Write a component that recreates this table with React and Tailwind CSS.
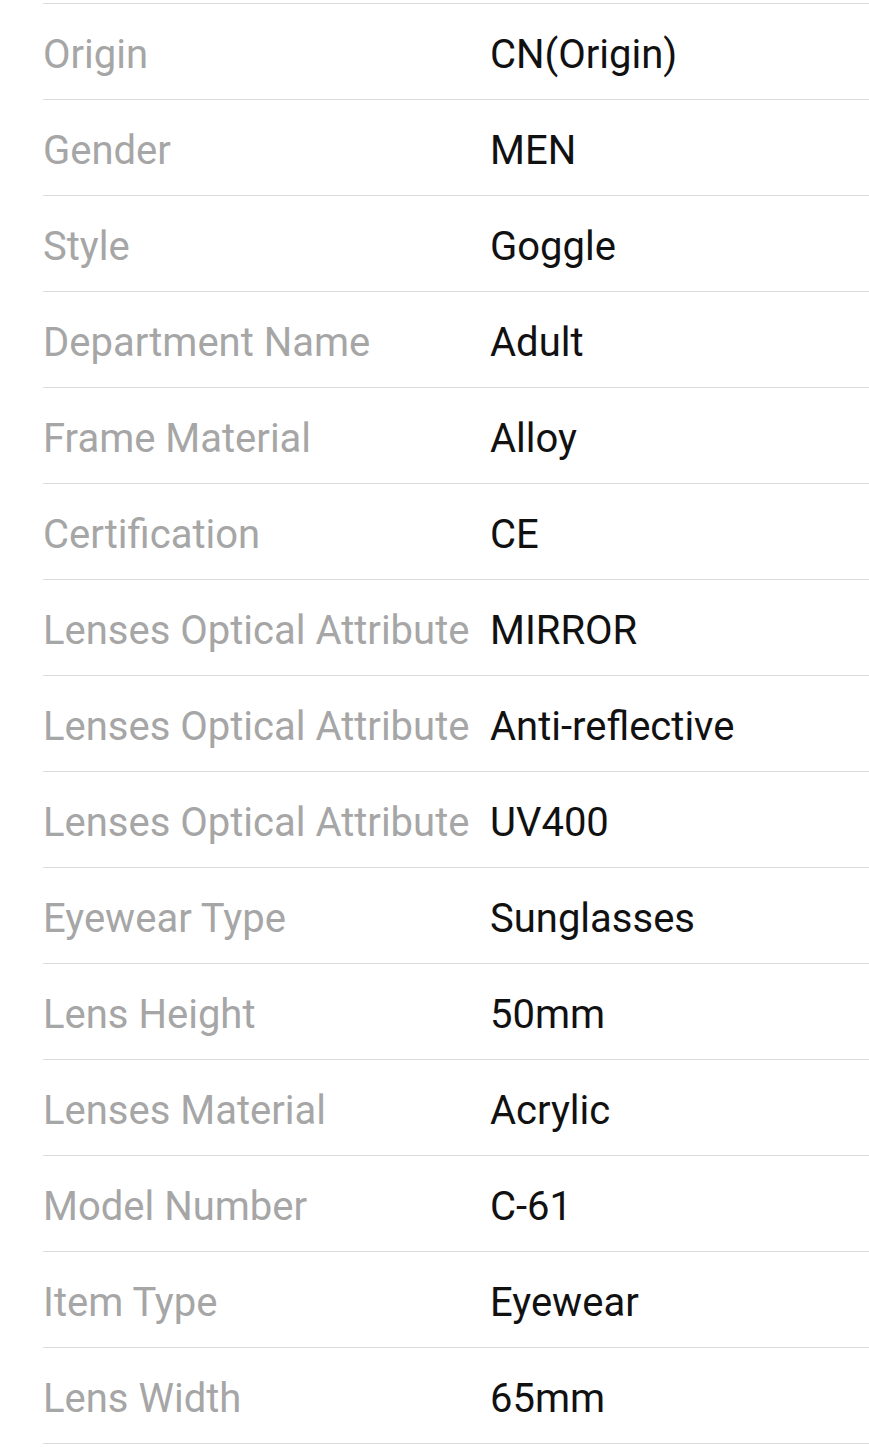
import React from 'react';

const specs = [
  ['Origin', 'CN(Origin)'],
  ['Gender', 'MEN'],
  ['Style', 'Goggle'],
  ['Department Name', 'Adult'],
  ['Frame Material', 'Alloy'],
  ['Certification', 'CE'],
  ['Lenses Optical Attribute', 'MIRROR'],
  ['Lenses Optical Attribute', 'Anti-reflective'],
  ['Lenses Optical Attribute', 'UV400'],
  ['Eyewear Type', 'Sunglasses'],
  ['Lens Height', '50mm'],
  ['Lenses Material', 'Acrylic'],
  ['Model Number', 'C-61'],
  ['Item Type', 'Eyewear'],
  ['Lens Width', '65mm'],
];

const App = () => {
  return (
    <div className="min-h-screen bg-white pt-[3px] pl-[43px] font-['Roboto',sans-serif]">
      <div className="border-t border-[#dcdcdc]">
        {specs.map(([label, value], i) => (
          <div
            key={i}
            className="grid grid-cols-[447px_1fr] items-center h-[96px] pt-[6px] border-b border-[#dcdcdc] text-[40px] leading-none"
          >
            <span className="text-[#a6a6a6] whitespace-nowrap">{label}</span>
            <span className="text-[#111111] whitespace-nowrap">{value}</span>
          </div>
        ))}
      </div>
    </div>
  );
};

export default App;
